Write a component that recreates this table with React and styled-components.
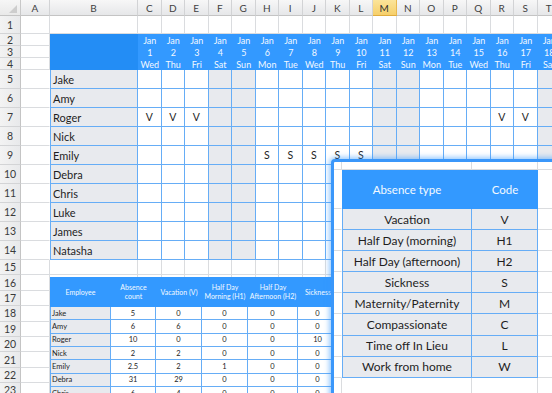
import React from 'react';
import styled, { createGlobalStyle, css } from 'styled-components';

const BLUE = '#3399ff';
const BLUE_DARK = '#238df5';
const LINE_BLUE = '#66adf6';
const GRID = '#dadcdf';
const FILL = '#e8eaee';
const FONT = 'Lato, "Liberation Sans", sans-serif';

const GlobalStyle = createGlobalStyle`
  html, body { margin: 0; padding: 0; background: #fff; overflow: hidden; }
  body { font-family: ${FONT}; }
`;

const COLS = 'CDEFGHIJKLMNOPQRSTUV'.split('');
const DAYS = ['Wed', 'Thu', 'Fri', 'Sat', 'Sun', 'Mon', 'Tue'];
const DAY_W = 23.5;

const dates = COLS.map((letter, i) => {
  const wd = DAYS[i % 7];
  return { letter, d: i + 1, wd, weekend: wd === 'Sat' || wd === 'Sun' };
});

const people = [
  { name: 'Jake', marks: {} },
  { name: 'Amy', marks: {} },
  { name: 'Roger', marks: { 1: 'V', 2: 'V', 3: 'V', 16: 'V', 17: 'V' } },
  { name: 'Nick', marks: {} },
  { name: 'Emily', marks: { 6: 'S', 7: 'S', 8: 'S', 9: 'S', 10: 'S' } },
  { name: 'Debra', marks: {} },
  { name: 'Chris', marks: {} },
  { name: 'Luke', marks: {} },
  { name: 'James', marks: {} },
  { name: 'Natasha', marks: {} },
];

const SUM_COLS = [61, 45, 46, 46, 50, 40];
const sumHead = ['Employee', 'Absence\ncount', 'Vacation (V)', 'Half Day\nMorning (H1)', 'Half Day\nAfternoon (H2)', 'Sickness'];
const sumRows = [
  ['Jake', 5, 0, 0, 0, 0],
  ['Amy', 6, 6, 0, 0, 0],
  ['Roger', 10, 0, 0, 0, 10],
  ['Nick', 2, 2, 0, 0, 0],
  ['Emily', 2.5, 2, 1, 0, 0],
  ['Debra', 31, 29, 0, 0, 0],
  ['Chris', 6, 4, 0, 0, 0],
];

const absence = [
  ['Vacation', 'V'],
  ['Half Day (morning)', 'H1'],
  ['Half Day (afternoon)', 'H2'],
  ['Sickness', 'S'],
  ['Maternity/Paternity', 'M'],
  ['Compassionate', 'C'],
  ['Time off In Lieu', 'L'],
  ['Work from home', 'W'],
];

/* ---------- sheet frame ---------- */
const Sheet = styled.div`
  position: relative;
  width: 552px;
  height: 393px;
  overflow: hidden;
  background: #fff;
  font-family: ${FONT};
  color: #222;
`;

const Row = styled.div`
  display: flex;
  flex: none;
  height: ${(p) => p.$h}px;
`;

const Corner = styled.div`
  flex: none;
  width: 21px;
  height: 100%;
  box-sizing: border-box;
  background: linear-gradient(#f6f6f6, #e9e9e9);
  border-right: 1px solid #c8c8c8;
  border-bottom: 1px solid #c4c4c4;
  display: flex;
  align-items: flex-end;
  justify-content: flex-end;
  padding: 0 3px 2px 0;
`;

const ColHead = styled.div`
  flex: none;
  width: ${(p) => p.$w}px;
  height: 100%;
  box-sizing: border-box;
  background: linear-gradient(#f7f7f7, #e6e7e9);
  border-right: 1px solid #d2d3d5;
  border-bottom: 1px solid #c4c4c4;
  display: flex;
  align-items: center;
  justify-content: center;
  font-size: 10px;
  color: #3f3f3f;
  ${(p) =>
    p.$active &&
    css`
      background: linear-gradient(#fbe49a, #f6cf6a);
      border-right-color: #e8b84f;
      border-bottom-color: #e0ac3e;
      color: #333;
    `}
`;

const RowHead = styled.div`
  flex: none;
  width: 21px;
  height: 100%;
  box-sizing: border-box;
  background: linear-gradient(90deg, #f3f3f3, #e8e9eb);
  border-right: 1px solid #c4c4c4;
  border-bottom: 1px solid #d3d4d6;
  display: flex;
  align-items: center;
  justify-content: center;
  font-size: 10.5px;
  color: #3a3a3a;
`;

const Blank = styled.div`
  flex: none;
  width: ${(p) => p.$w}px;
  height: 100%;
  box-sizing: border-box;
  border-right: 1px solid ${(p) => (p.$noRight ? 'transparent' : GRID)};
  border-bottom: 1px solid ${GRID};
`;

const BandCell = styled.div`
  flex: none;
  width: ${(p) => p.$w}px;
  height: 100%;
  background: ${(p) => (p.$dark ? BLUE_DARK : BLUE)};
  color: #f2f8ff;
  font-size: 9px;
  display: flex;
  align-items: center;
  justify-content: center;
  white-space: nowrap;
`;

const NameCell = styled.div`
  flex: none;
  width: 88px;
  height: 100%;
  box-sizing: border-box;
  background: ${FILL};
  border-left: 1px solid ${LINE_BLUE};
  border-right: 1px solid ${LINE_BLUE};
  border-bottom: 1px solid ${LINE_BLUE};
  display: flex;
  align-items: center;
  padding-left: 2px;
  font-size: 11px;
  color: #1e1e1e;
`;

const DayCell = styled.div`
  flex: none;
  width: ${DAY_W}px;
  height: 100%;
  box-sizing: border-box;
  background: ${(p) => (p.$weekend ? FILL : '#fff')};
  border-right: 1px solid ${LINE_BLUE};
  border-bottom: 1px solid ${LINE_BLUE};
  display: flex;
  align-items: center;
  justify-content: center;
  font-size: 10.5px;
  color: #1e1e1e;
`;

/* ---------- summary table (floating) ---------- */
const Summary = styled.div`
  position: absolute;
  left: 50px;
  top: 277px;
  display: grid;
  grid-template-columns: ${SUM_COLS.map((w) => `${w}px`).join(' ')};
  grid-template-rows: 30px repeat(${sumRows.length}, 13.33px);
  background: #fff;
`;

const SumHead = styled.div`
  background: ${BLUE};
  color: #f4f9ff;
  font-size: 7px;
  line-height: 9px;
  white-space: pre-line;
  text-align: center;
  display: flex;
  align-items: center;
  justify-content: center;
`;

const SumCell = styled.div`
  box-sizing: border-box;
  background: ${(p) => (p.$name ? FILL : '#fff')};
  border-right: 1px solid ${LINE_BLUE};
  border-bottom: 1px solid ${LINE_BLUE};
  ${(p) => p.$name && css`border-left: 1px solid ${LINE_BLUE};`}
  font-size: 7.5px;
  color: #1e1e1e;
  display: flex;
  align-items: center;
  justify-content: ${(p) => (p.$name ? 'flex-start' : 'center')};
  padding-left: ${(p) => (p.$name ? '1px' : '0')};
`;

/* ---------- absence type panel (selected floating picture) ---------- */
const Panel = styled.div`
  position: absolute;
  left: 331px;
  top: 159px;
  width: 260px;
  height: 250px;
  box-sizing: border-box;
  border: 3px solid #3a97fa;
  border-top-left-radius: 4px;
  background: #fff;
  box-shadow: 0 0 5px 2px rgba(51, 153, 255, 0.5);
  display: grid;
  grid-template-columns: 8px 130px 66px 60px;
  grid-template-rows: 8px 39px repeat(9, 21.1px);
  overflow: hidden;
`;

const PanelBlank = styled.div`
  box-sizing: border-box;
  border-right: 1px solid ${(p) => (p.$noRight ? 'transparent' : GRID)};
  border-bottom: 1px solid ${GRID};
`;

const PanelHead = styled.div`
  background: ${BLUE};
  color: #f4f9ff;
  font-size: 11.5px;
  display: flex;
  align-items: center;
  justify-content: center;
`;

const PanelItem = styled.div`
  box-sizing: border-box;
  background: ${FILL};
  border-right: 1px solid ${LINE_BLUE};
  border-bottom: 1px solid ${LINE_BLUE};
  ${(p) => p.$first && css`border-left: 1px solid ${LINE_BLUE};`}
  font-size: 12px;
  color: #1e1e1e;
  display: flex;
  align-items: center;
  justify-content: center;
  white-space: nowrap;
`;

const blankCells = (keyPrefix) => [
  <Blank key={`${keyPrefix}-a`} $w={29} />,
  <Blank key={`${keyPrefix}-b`} $w={88} />,
  ...dates.map((c) => <Blank key={`${keyPrefix}-${c.letter}`} $w={DAY_W} />),
];

export default function App() {
  const bandLines = [(c) => 'Jan', (c) => c.d, (c) => c.wd];
  const lowerRows = [15, 16, 17, 18, 19, 20, 21, 22, 23];

  return (
    <>
      <GlobalStyle />
      <Sheet>
        <Row $h={16}>
          <Corner>
            <svg width="8" height="8" viewBox="0 0 8 8">
              <polygon points="8,0 8,8 0,8" fill="#cdcdcd" />
            </svg>
          </Corner>
          <ColHead $w={29}>A</ColHead>
          <ColHead $w={88}>B</ColHead>
          {dates.map((c) => (
            <ColHead key={c.letter} $w={DAY_W} $active={c.letter === 'M'}>
              {c.letter}
            </ColHead>
          ))}
        </Row>

        <Row $h={18}>
          <RowHead>1</RowHead>
          {blankCells('r1')}
        </Row>

        {bandLines.map((fn, i) => (
          <Row key={`band-${i}`} $h={12}>
            <RowHead>{i + 2}</RowHead>
            <Blank $w={29} />
            <BandCell $w={88} $dark />
            {dates.map((c) => (
              <BandCell key={c.letter} $w={DAY_W}>
                {fn(c)}
              </BandCell>
            ))}
          </Row>
        ))}

        {people.map((p, i) => (
          <Row key={p.name} $h={19}>
            <RowHead>{i + 5}</RowHead>
            <Blank $w={29} $noRight />
            <NameCell>{p.name}</NameCell>
            {dates.map((c) => (
              <DayCell key={c.letter} $weekend={c.weekend}>
                {p.marks[c.d] || ''}
              </DayCell>
            ))}
          </Row>
        ))}

        {lowerRows.map((n) => (
          <Row key={`r${n}`} $h={15.4}>
            <RowHead>{n}</RowHead>
            {blankCells(`r${n}`)}
          </Row>
        ))}

        <Summary>
          {sumHead.map((h) => (
            <SumHead key={h}>{h}</SumHead>
          ))}
          {sumRows.map((r) =>
            r.map((v, j) => (
              <SumCell key={`${r[0]}-${j}`} $name={j === 0}>
                {v}
              </SumCell>
            ))
          )}
        </Summary>

        <Panel>
          <PanelBlank />
          <PanelBlank />
          <PanelBlank />
          <PanelBlank />

          <PanelBlank $noRight />
          <PanelHead>Absence type</PanelHead>
          <PanelHead>Code</PanelHead>
          <PanelBlank />

          {absence.map(([label, code]) => (
            <React.Fragment key={code}>
              <PanelBlank $noRight />
              <PanelItem $first>{label}</PanelItem>
              <PanelItem>{code}</PanelItem>
              <PanelBlank />
            </React.Fragment>
          ))}

          <PanelBlank />
          <PanelBlank />
          <PanelBlank />
          <PanelBlank />
        </Panel>
      </Sheet>
    </>
  );
}
